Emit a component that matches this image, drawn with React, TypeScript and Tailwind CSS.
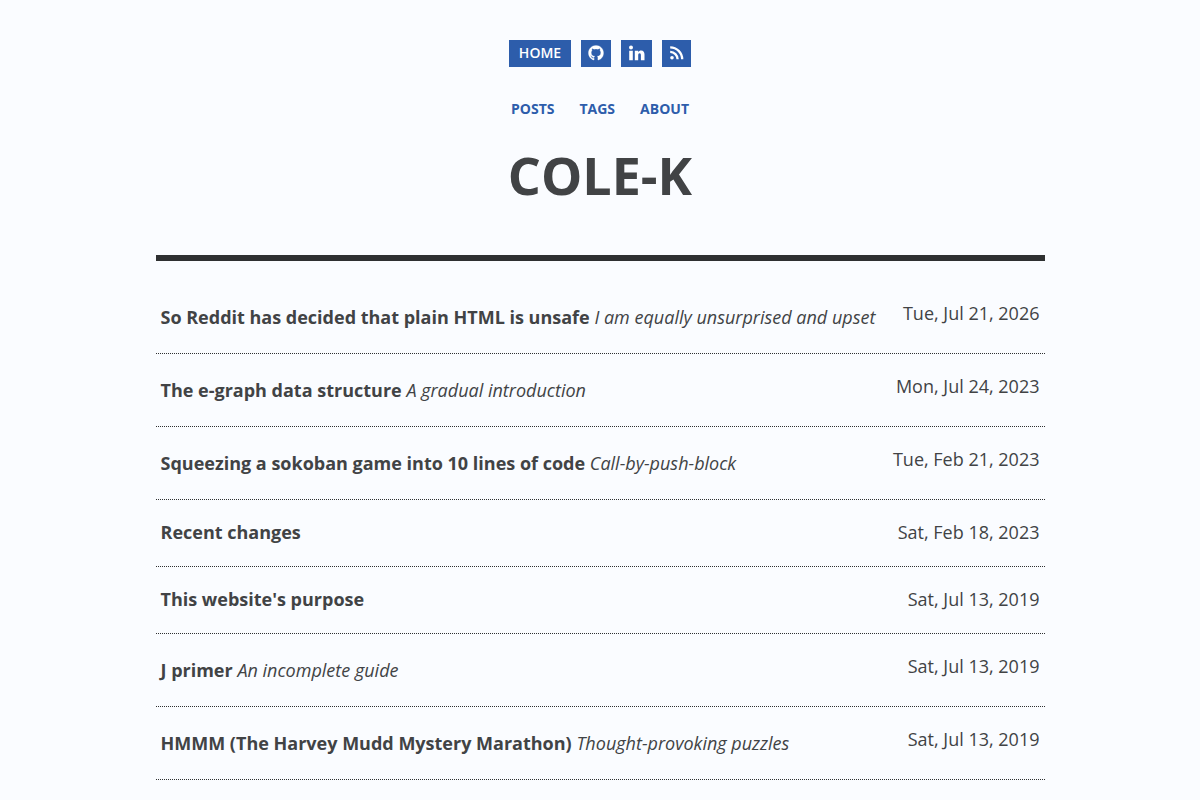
import type { ReactNode } from "react";

type Post = {
  title: string;
  subtitle?: string;
  date: string;
};

const posts: Post[] = [
  {
    title: "So Reddit has decided that plain HTML is unsafe",
    subtitle: "I am equally unsurprised and upset",
    date: "Tue, Jul 21, 2026",
  },
  {
    title: "The e-graph data structure",
    subtitle: "A gradual introduction",
    date: "Mon, Jul 24, 2023",
  },
  {
    title: "Squeezing a sokoban game into 10 lines of code",
    subtitle: "Call-by-push-block",
    date: "Tue, Feb 21, 2023",
  },
  { title: "Recent changes", date: "Sat, Feb 18, 2023" },
  { title: "This website's purpose", date: "Sat, Jul 13, 2019" },
  { title: "J primer", subtitle: "An incomplete guide", date: "Sat, Jul 13, 2019" },
  {
    title: "HMMM (The Harvey Mudd Mystery Marathon)",
    subtitle: "Thought-provoking puzzles",
    date: "Sat, Jul 13, 2019",
  },
];

function GithubIcon() {
  return (
    <svg width="16" height="16" viewBox="-0.5 -0.4 17 17" fill="currentColor" stroke="currentColor" strokeWidth="0.3" aria-hidden="true">
      <path d="M8 0C3.58 0 0 3.58 0 8c0 3.54 2.29 6.53 5.47 7.59.4.07.55-.17.55-.38 0-.19-.01-.82-.01-1.49-2.01.37-2.53-.49-2.69-.94-.09-.23-.48-.94-.82-1.13-.28-.15-.68-.52-.01-.53.63-.01 1.08.58 1.23.82.72 1.21 1.87.87 2.33.66.07-.52.28-.87.51-1.07-1.78-.2-3.64-.89-3.64-3.95 0-.87.31-1.59.82-2.15-.08-.2-.36-1.02.08-2.12 0 0 .67-.21 2.2.82.64-.18 1.32-.27 2-.27s1.36.09 2 .27c1.53-1.04 2.2-.82 2.2-.82.44 1.1.16 1.92.08 2.12.51.56.82 1.27.82 2.15 0 3.07-1.87 3.75-3.65 3.95.29.25.54.73.54 1.48 0 1.07-.01 1.93-.01 2.2 0 .21.15.46.55.38A8.01 8.01 0 0 0 16 8c0-4.42-3.58-8-8-8z" />
    </svg>
  );
}

function LinkedinIcon() {
  return (
    <svg width="17" height="16" viewBox="0 0 17 16" fill="currentColor" aria-hidden="true">
      <circle cx="3" cy="2.6" r="2" />
      <path d="M1.2 5.7h3.6v9.6H1.2zM6.8 5.7h3.4V7c.6-1 1.6-1.6 2.9-1.6 2.5 0 3.4 1.6 3.4 4.2v5.7h-3.6v-5.1c0-1.2-.3-2-1.3-2s-1.4.8-1.4 2v5.1H6.8z" />
    </svg>
  );
}

function RssIcon() {
  return (
    <svg width="15" height="16" viewBox="0 0 15 16" aria-hidden="true">
      <circle cx="3" cy="12.7" r="1.8" fill="currentColor" />
      <path
        d="M1.2 6.9a7.4 7.4 0 0 1 7.4 7.4M1.2 2.3a12 12 0 0 1 12 12"
        fill="none"
        stroke="currentColor"
        strokeWidth="2.3"
      />
    </svg>
  );
}

function NavButton({ label, children }: { label?: string; children: ReactNode }) {
  return (
    <a
      href="#"
      aria-label={label}
      className="flex h-[27px] items-center bg-[#2d5dab] px-[7px] pb-0.5 text-sm font-semibold text-white hover:bg-[#234a8a]"
    >
      {children}
    </a>
  );
}

function PostRow({ post }: { post: Post }) {
  return (
    <li
      className={`flex justify-between border-b border-dotted border-[#2e3031] px-[5px] pt-[19px] ${
        post.subtitle ? "pb-[23px]" : "pb-[21px]"
      }`}
    >
      <a href="#" className={`hover:underline ${post.subtitle ? "pt-1" : ""}`}>
        <strong className="font-bold">{post.title}</strong>
        {post.subtitle && <em> {post.subtitle}</em>}
      </a>
      <time className="shrink-0 pl-4">{post.date}</time>
    </li>
  );
}

export default function App() {
  return (
    <div className="min-h-screen bg-[#fafcff] px-5 font-['Open_Sans',sans-serif] text-lg leading-[26px] text-[#414345]">
      <div className="mx-auto max-w-[889px]">
        <header className="flex flex-col items-center border-b-6 border-[#2e3031] pt-10 pb-11">
          <nav aria-label="Site" className="flex gap-[10px]">
            <NavButton>
              <span className="px-[3px]">HOME</span>
            </NavButton>
            <NavButton label="GitHub">
              <GithubIcon />
            </NavButton>
            <NavButton label="LinkedIn">
              <LinkedinIcon />
            </NavButton>
            <NavButton label="RSS feed">
              <RssIcon />
            </NavButton>
          </nav>
          <nav
            aria-label="Sections"
            className="mt-7 flex gap-[25px] text-sm leading-7 font-bold text-[#2d5dab]"
          >
            <a href="#" className="hover:underline">POSTS</a>
            <a href="#" className="hover:underline">TAGS</a>
            <a href="#" className="hover:underline">ABOUT</a>
          </nav>
          <h1 className="mt-4 text-[52px] leading-[72px] font-bold">COLE-K</h1>
        </header>

        <ul className="pt-5">
          {posts.map((post) => (
            <PostRow key={post.title} post={post} />
          ))}
        </ul>
      </div>
    </div>
  );
}
